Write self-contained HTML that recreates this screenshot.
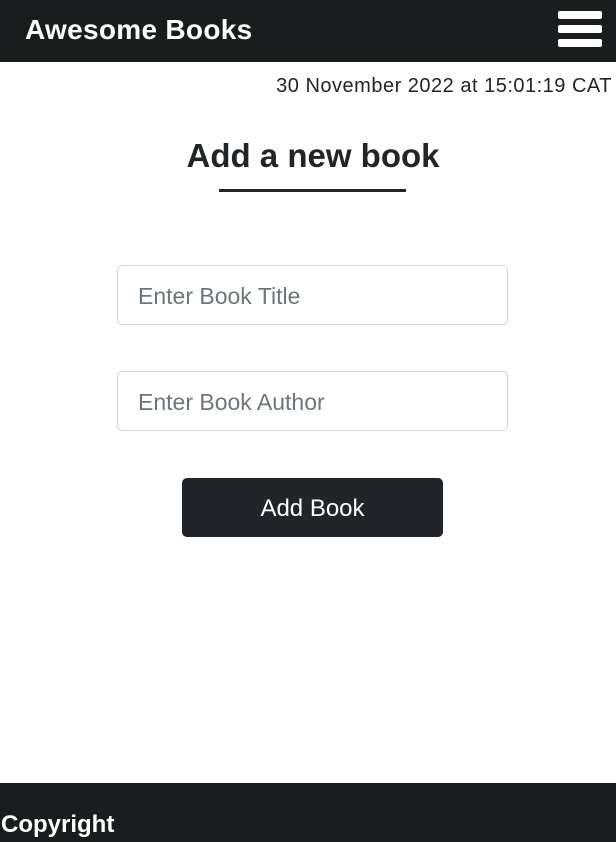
<!DOCTYPE html>
<html><head><style>
body{margin:0;width:616px;height:842px;position:relative;background:#fff;font-family:"Liberation Sans",sans-serif;color:#212529;overflow:hidden}
.hdr{position:absolute;left:0;top:0;width:616px;height:62px;background:#1a1d1e}
.logo{position:absolute;left:25px;top:14px;color:#fff;font-weight:bold;font-size:28px;letter-spacing:0.3px}
.bar{position:absolute;left:558px;width:44px;height:8px;background:#fff;border-radius:2px}
.date{position:absolute;right:4px;top:75px;font-size:20px;letter-spacing:0.5px;color:#212529}
h1{position:absolute;left:0;width:626px;top:137px;margin:0;text-align:center;font-size:33px;font-weight:bold}
.line{position:absolute;left:219px;top:189px;width:187px;height:3px;background:#212529}
.inp{position:absolute;left:117px;width:391px;height:60px;border:1px solid #ced4da;border-radius:5px;box-sizing:border-box;font-size:23px;color:#6c757d;padding:17px 20px}
.btn{position:absolute;left:182px;top:478px;width:261px;height:59px;background:#212529;border-radius:5px;color:#fff;font-size:24px;text-align:center;line-height:61px}
.ftr{position:absolute;left:0;top:783px;width:616px;height:59px;background:#1a1d1e}
.ftr span{position:absolute;left:1px;top:28px;color:#fff;font-weight:bold;font-size:24px}
</style></head><body>
<div class="hdr"><div class="logo">Awesome Books</div>
<div class="bar" style="top:11px"></div><div class="bar" style="top:25px"></div><div class="bar" style="top:39px"></div></div>
<div class="date">30 November 2022 at 15:01:19 CAT</div>
<h1>Add a new book</h1>
<div class="line"></div>
<div class="inp" style="top:265px">Enter Book Title</div>
<div class="inp" style="top:371px">Enter Book Author</div>
<div class="btn">Add Book</div>
<div class="ftr"><span>Copyright</span></div>
</body></html>
